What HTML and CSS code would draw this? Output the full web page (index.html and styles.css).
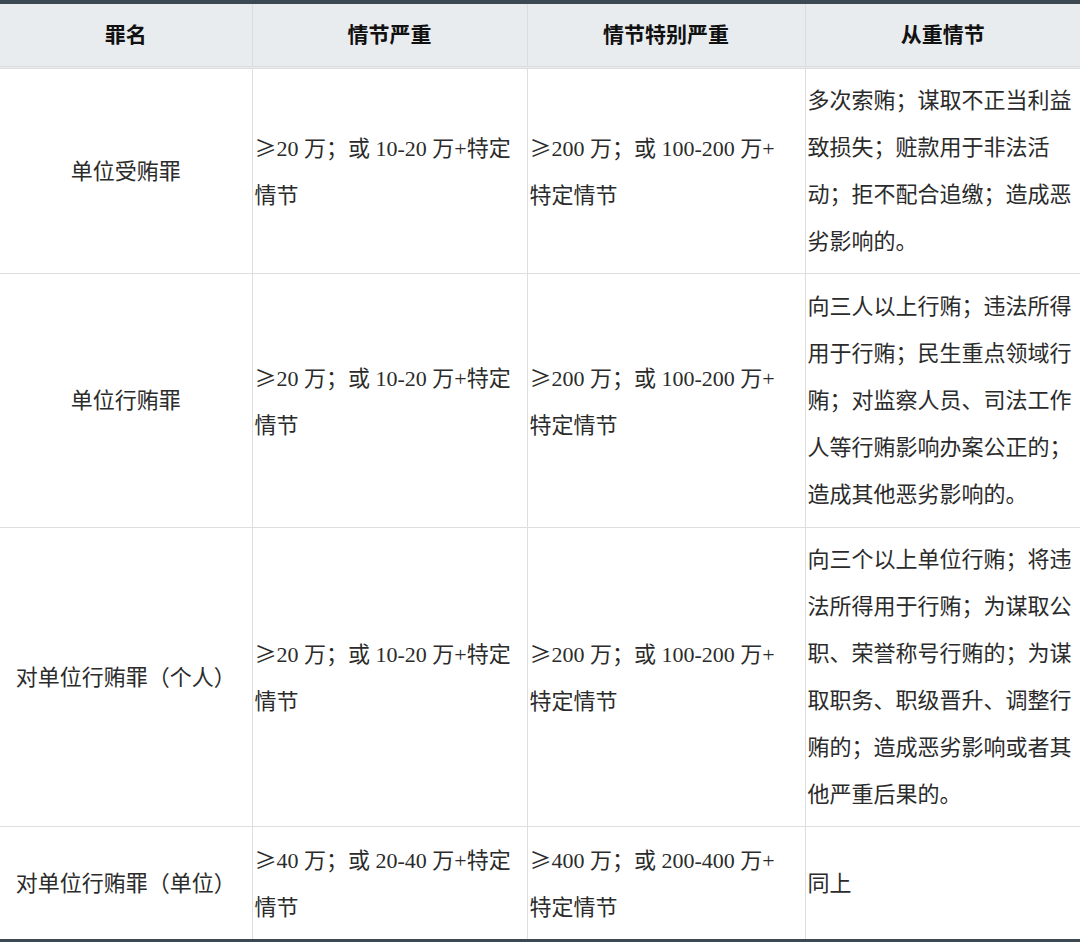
FILE: index.html
```html
<!DOCTYPE html>
<html lang="zh-CN">
<head>
<meta charset="utf-8">
<title>单位贿赂犯罪量刑标准</title>
<link rel="stylesheet" href="styles.css">
</head>
<body>
<table class="crime-table">
  <colgroup>
    <col class="c1"><col class="c2"><col class="c3"><col class="c4">
  </colgroup>
  <thead>
    <tr>
      <th>罪名</th>
      <th>情节严重</th>
      <th>情节特别严重</th>
      <th>从重情节</th>
    </tr>
  </thead>
  <tbody>
    <tr>
      <td class="name">单位受贿罪</td>
      <td><span class="ge">≥</span>20 万；或 10-20 万+特定<br>情节</td>
      <td><span class="ge">≥</span>200 万；或 100-200 万+<br>特定情节</td>
      <td>多次索贿；谋取不正当利益<br>致损失；赃款用于非法活<br>动；拒不配合追缴；造成恶<br>劣影响的。</td>
    </tr>
    <tr class="tall">
      <td class="name">单位行贿罪</td>
      <td><span class="ge">≥</span>20 万；或 10-20 万+特定<br>情节</td>
      <td><span class="ge">≥</span>200 万；或 100-200 万+<br>特定情节</td>
      <td>向三人以上行贿；违法所得<br>用于行贿；民生重点领域行<br>贿；对监察人员、司法工作<br>人等行贿影响办案公正的；<br>造成其他恶劣影响的。</td>
    </tr>
    <tr>
      <td class="name">对单位行贿罪（个人）</td>
      <td><span class="ge">≥</span>20 万；或 10-20 万+特定<br>情节</td>
      <td><span class="ge">≥</span>200 万；或 100-200 万+<br>特定情节</td>
      <td>向三个以上单位行贿；将违<br>法所得用于行贿；为谋取公<br>职、荣誉称号行贿的；为谋<br>取职务、职级晋升、调整行<br>贿的；造成恶劣影响或者其<br>他严重后果的。</td>
    </tr>
    <tr>
      <td class="name">对单位行贿罪（单位）</td>
      <td><span class="ge">≥</span>40 万；或 20-40 万+特定<br>情节</td>
      <td><span class="ge">≥</span>400 万；或 200-400 万+<br>特定情节</td>
      <td>同上</td>
    </tr>
  </tbody>
</table>
</body>
</html>
```
FILE: styles.css
```css
html, body {
  margin: 0;
  padding: 0;
  background: #ffffff;
}

.crime-table {
  width: 1080px;
  border-collapse: collapse;
  table-layout: fixed;
  font-family: "Liberation Serif", "Noto Sans CJK SC", serif;
  font-size: 22px;
  color: #2b2b2b;
  border-top: 4px solid #3c4852;
  border-bottom: 4px solid #3c4852;
}

.c1 { width: 252px; }
.c2 { width: 275px; }
.c3 { width: 278px; }
.c4 { width: 275px; }

.crime-table th {
  background: #e9ecef;
  color: #111111;
  font-weight: bold;
  font-size: 21px;
  line-height: 46px;
  padding: 8px 2px;
  text-align: center;
  border-left: 1px solid #dcdcdc;
  border-right: 1px solid #dcdcdc;
  border-bottom: 3px double #dddddd;
}

.crime-table td {
  line-height: 47px;
  padding: 8px 2px;
  vertical-align: middle;
  text-align: left;
  white-space: nowrap;
  border: 1px solid #dedede;
}

.crime-table tr.tall td {
  padding-top: 9px;
  padding-bottom: 9px;
}

.crime-table th:first-child,
.crime-table td:first-child {
  border-left: none;
}

.crime-table th:last-child,
.crime-table td:last-child {
  border-right: none;
}

.crime-table tbody tr:last-child td {
  border-bottom: none;
}

.crime-table td.name {
  text-align: center;
}

.ge {
  font-family: "Noto Sans CJK SC", sans-serif;
  display: inline-block;
  width: 22px;
  text-align: center;
}
```
